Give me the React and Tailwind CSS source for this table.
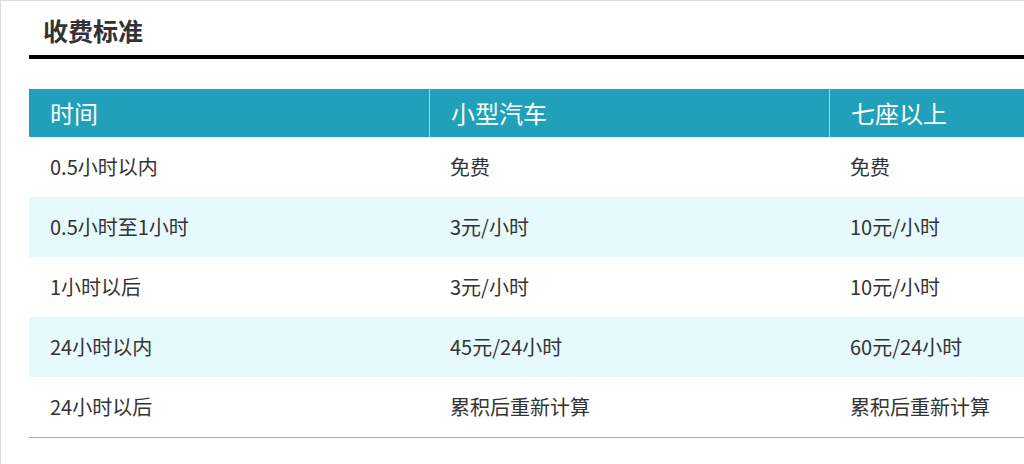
const rows = [
	["0.5小时以内", "免费", "免费"],
	["0.5小时至1小时", "3元/小时", "10元/小时"],
	["1小时以后", "3元/小时", "10元/小时"],
	["24小时以内", "45元/24小时", "60元/24小时"],
	["24小时以后", "累积后重新计算", "累积后重新计算"],
];

const headers = ["时间", "小型汽车", "七座以上"];

export default function App() {
	return (
		<div
			className="w-[1024px] h-[464px] overflow-hidden bg-white border-l border-t border-[#dcdcdc]"
			style={{ fontFamily: '"Noto Sans CJK SC", "Noto Sans", sans-serif' }}
		>
			<div className="pl-7">
				<div className="w-[1200px]">
					<h2 className="pl-[14px] pt-[12px] h-[54px] text-[25px] leading-[34px] font-bold text-[#333]">
						收费标准
					</h2>
					<div className="h-1 bg-black" />
					<div className="mt-[30px]">
						<div className="flex h-12 bg-[#21a1b9] text-white text-[24px]">
							{headers.map((h, i) => (
								<div
									key={i}
									className={
										"w-[400px] flex items-center pl-[21px] " +
										(i > 0 ? "border-l border-[#7fe6f3]" : "")
									}
								>
									{h}
								</div>
							))}
						</div>
						{rows.map((r, i) => (
							<div
								key={i}
								className={
									"flex h-[60px] text-[20px] text-[#333] " +
									(i % 2 === 1 ? "bg-[#e6f9fd]" : "bg-white")
								}
							>
								{r.map((c, j) => (
									<div key={j} className="w-[400px] flex items-center pl-[21px]">
										{c}
									</div>
								))}
							</div>
						))}
						<div className="h-px bg-[#aaaaaa]" />
					</div>
				</div>
			</div>
		</div>
	);
}
